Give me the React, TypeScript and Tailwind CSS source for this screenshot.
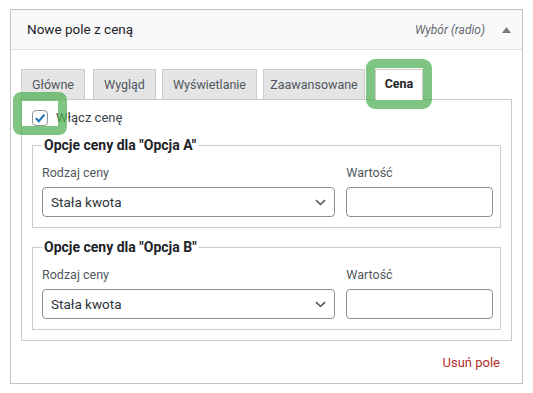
import React from 'react';

const tabs = [
  { label: 'Główne', w: 'w-[64px]', mr: 'mr-[8px]' },
  { label: 'Wygląd', w: 'w-[63px]', mr: 'mr-[6px]' },
  { label: 'Wyświetlanie', w: 'w-[95px]', mr: 'mr-[6px]' },
  { label: 'Zaawansowane', w: 'w-[102px]', mr: 'mr-[10px]' },
];

const Chevron = () => (
  <svg width="11" height="7" viewBox="0 0 11 7" fill="none">
    <path d="M1 1.2 L5.5 5.5 L10 1.2" stroke="#50575e" strokeWidth="1.6" />
  </svg>
);

const PriceFieldset = ({ option, className }: { option: string; className?: string }) => (
  <fieldset className={`border border-[#cccccc] pl-[9px] pr-[7px] pt-[10px] pb-[10px] ${className ?? ''}`}>
    <legend className="px-[2px] text-[14px] font-bold leading-[18px] text-[#1d2327]">
      Opcje ceny dla "{option}"
    </legend>
    <div className="grid grid-cols-[2fr_1fr] gap-x-[11px]">
      <div>
        <div className="mb-[5px] text-[12.5px] leading-[18px] text-[#50575e]">Rodzaj ceny</div>
        <div className="flex h-[30px] items-center justify-between rounded-[4px] border border-[#8c8f94] bg-white pl-[8px] pr-[8px] text-[13.5px] text-[#2c3338]">
          <span>Stała kwota</span>
          <Chevron />
        </div>
      </div>
      <div>
        <div className="mb-[5px] text-[12.5px] leading-[18px] text-[#50575e]">Wartość</div>
        <div className="h-[30px] rounded-[4px] border border-[#8c8f94] bg-white" />
      </div>
    </div>
  </fieldset>
);

export default function App() {
  return (
    <div className="min-h-[393px] w-[533px] bg-white pt-[9px] font-['Roboto',sans-serif]">
      <div className="ml-[10px] w-[513px] border border-[#c3c4c7] bg-white">
        {/* header */}
        <div className="flex h-[40px] items-center justify-between border-b border-[#dcdcde] bg-[#f9f9f9] pl-[16px] pr-[11px]">
          <span className="text-[13.5px] text-[#1d2327]">Nowe pole z ceną</span>
          <div className="flex items-center gap-[17px]">
            <span className="text-[12px] italic text-[#646970]">Wybór (radio)</span>
            <svg width="9" height="6" viewBox="0 0 9 6">
              <path d="M0 6 L4.5 0 L9 6 Z" fill="#787c82" />
            </svg>
          </div>
        </div>

        <div className="px-[10px] pt-[19px] pb-[11px]">
          {/* tabs */}
          <div className="flex items-end text-[12.5px]">
            {tabs.map((t) => (
              <div
                key={t.label}
                className={`flex h-[30px] items-center justify-center border border-b-0 border-[#cccccc] bg-[#e5e5e5] pt-[2px] text-[#50575e] ${t.w} ${t.mr}`}
              >
                {t.label}
              </div>
            ))}
            <div className="relative z-10 -mb-px flex h-[31px] w-[48px] items-center justify-center border border-b-0 border-[#cccccc] bg-white pb-[1px] font-bold text-[#1d2327]">
              Cena
              <div className="pointer-events-none absolute -left-[10px] -top-[11px] h-[50px] w-[66px] rounded-[9px] border-[9px] border-[rgba(76,175,80,0.72)]" />
            </div>
          </div>

          {/* panel */}
          <div className="relative border border-[#cccccc] p-[10px]">
            <div className="flex h-[16px] items-center gap-[8px]">
              <div className="flex h-[16px] w-[16px] items-center justify-center rounded-[4px] border border-[#8c8f94] bg-white">
                <svg width="12" height="12" viewBox="0 0 12 12" fill="none">
                  <path d="M1.8 6.2 L4.8 9.2 L10.4 2.6" stroke="#2271b1" strokeWidth="2.1" />
                </svg>
              </div>
              <span className="text-[13px] text-[#3c434a]">Włącz cenę</span>
            </div>
            <div className="pointer-events-none absolute -left-[9px] -top-[8px] z-10 h-[43px] w-[54px] rounded-[8px] border-[9px] border-[rgba(76,175,80,0.72)]" />

            <PriceFieldset option="Opcja A" className="mt-[10px]" />
            <PriceFieldset option="Opcja B" className="mt-[10px]" />
          </div>

          <div className="mt-[13px] pr-[12px] text-right text-[13px] leading-[18px] text-[#b32d2e]">Usuń pole</div>
        </div>
      </div>
    </div>
  );
}
